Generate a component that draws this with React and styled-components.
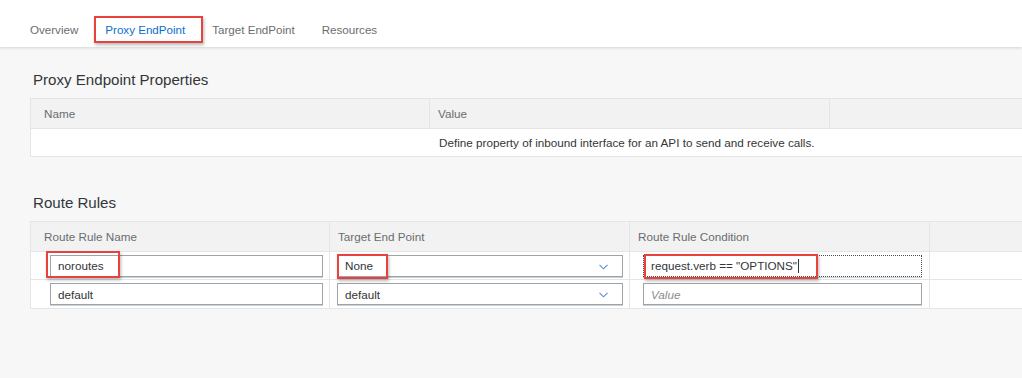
import React from "react";
import styled, { createGlobalStyle } from "styled-components";

const GlobalStyle = createGlobalStyle`
  html, body { margin: 0; padding: 0; background: #f7f7f7; overflow: hidden; }
  body { font-family: "Liberation Sans", Arial, sans-serif; }
  * { box-sizing: border-box; }
`;

const Page = styled.div`
  width: 1022px;
  height: 378px;
  background: #f7f7f7;
  overflow: hidden;
`;

const TabBar = styled.nav`
  position: relative;
  z-index: 1;
  height: 47px;
  background: #fff;
  box-shadow: 0 1px 3px rgba(0, 0, 0, 0.14);
  display: flex;
  align-items: center;
  gap: 27px;
  padding: 13px 0 0 30px;
`;

const Tab = styled.span`
  position: relative;
  font-size: 11.6px;
  line-height: 14px;
  color: ${(p) => (p.$active ? "#0a6ed1" : "#6a6d70")};
  white-space: nowrap;
`;

const Highlight = styled.span`
  position: absolute;
  top: ${(p) => p.$top}px;
  left: ${(p) => p.$left}px;
  width: ${(p) => p.$w}px;
  height: ${(p) => p.$h}px;
  border: 2px solid #e8413e;
  box-shadow: 1px 2px 3px rgba(0, 0, 0, 0.28);
  pointer-events: none;
  z-index: 2;
`;

const Content = styled.main`
  padding-left: 30px;
`;

const Section = styled.section`
  margin-top: ${(p) => p.$mt || 0}px;
`;

const Title = styled.h2`
  margin: 0;
  height: 51px;
  padding: 14px 0 0 3px;
  display: flex;
  align-items: center;
  font-size: 15.1px;
  font-weight: normal;
  color: #32363a;
`;

const Table = styled.div`
  display: grid;
  grid-template-columns: ${(p) => p.$cols};
  width: 1100px;
  border: 1px solid #e5e5e5;
  border-right: none;
  background: #fff;
`;

const HeadCell = styled.div`
  height: 30px;
  background: #f2f2f2;
  border-bottom: 1px solid #e5e5e5;
  border-right: 1px solid #e5e5e5;
  display: flex;
  align-items: center;
  padding-left: ${(p) => p.$pl ?? 8}px;
  font-size: 11.7px;
  color: #6a6d70;
  white-space: nowrap;
`;

const Cell = styled.div`
  height: ${(p) => p.$h || 28}px;
  display: flex;
  align-items: center;
  padding-left: ${(p) => p.$pl ?? 8}px;
  padding-right: ${(p) => p.$pr ?? 0}px;
  border-right: ${(p) => (p.$divider ? "1px solid #e5e5e5" : "none")};
  border-bottom: ${(p) => (p.$last ? "none" : "1px solid #e5e5e5")};
  font-size: 11.7px;
  color: #32363a;
  white-space: nowrap;
`;

const Field = styled.div`
  position: relative;
  flex: 1;
  height: 22px;
  display: flex;
  align-items: center;
  padding: 0 7px;
  background: #fff;
  border: 1px ${(p) => (p.$focused ? "dotted #4a4d50" : "solid #9ea3a8")};
  box-shadow: 0 1px 0 #c9d1d9;
  font-size: 11.7px;
  color: #32363a;
`;

const Placeholder = styled.span`
  font-style: italic;
  color: #8a8d90;
`;

const Caret = styled.span`
  display: inline-block;
  width: 1px;
  height: 14px;
  background: #32363a;
  margin-left: 1px;
`;

const Chevron = styled.svg`
  position: absolute;
  right: 14px;
  top: 8px;
`;

const ChevronIcon = () => (
  <Chevron width="9" height="6" viewBox="0 0 9 6" fill="none">
    <path d="M0.5 0.8 L4.5 4.8 L8.5 0.8" stroke="#5a8fcf" strokeWidth="1.1" />
  </Chevron>
);

const routeRows = [
  { name: "noroutes", target: "None", cond: 'request.verb == "OPTIONS"', hl: true },
  { name: "default", target: "default", cond: "" },
];

export default function App() {
  return (
    <Page>
      <GlobalStyle />
      <TabBar>
        <Tab>Overview</Tab>
        <Tab $active>
          Proxy EndPoint
          <Highlight $top={-7} $left={-11} $w={109} $h={27} />
        </Tab>
        <Tab>Target EndPoint</Tab>
        <Tab>Resources</Tab>
      </TabBar>
      <Content>
        <Section>
          <Title>Proxy Endpoint Properties</Title>
          <Table $cols="399px 400px 1fr">
            <HeadCell $pl={13}>Name</HeadCell>
            <HeadCell>Value</HeadCell>
            <HeadCell />
            <Cell $h={27} $last />
            <Cell $h={27} $pl={9} $last>
              Define property of inbound interface for an API to send and receive calls.
            </Cell>
            <Cell $h={27} $last />
          </Table>
        </Section>
        <Section $mt={13}>
          <Title>Route Rules</Title>
          <Table $cols="299px 300px 300px 1fr">
            <HeadCell $pl={13}>Route Rule Name</HeadCell>
            <HeadCell>Target End Point</HeadCell>
            <HeadCell>Route Rule Condition</HeadCell>
            <HeadCell />
            {routeRows.map((r, i) => {
              const last = i === routeRows.length - 1;
              return (
                <React.Fragment key={r.name}>
                  <Cell $divider $last={last} $pl={19} $pr={6}>
                    <Field>
                      {r.name}
                      {r.hl && <Highlight $top={-5} $left={-5} $w={74} $h={27} />}
                    </Field>
                  </Cell>
                  <Cell $divider $last={last} $pl={7} $pr={6}>
                    <Field>
                      {r.target}
                      <ChevronIcon />
                      {r.hl && <Highlight $top={-2} $left={-1} $w={51} $h={25} />}
                    </Field>
                  </Cell>
                  <Cell $divider $last={last} $pl={13} $pr={7}>
                    <Field $focused={r.hl}>
                      {r.cond ? (
                        <>
                          {r.cond}
                          <Caret />
                        </>
                      ) : (
                        <Placeholder>Value</Placeholder>
                      )}
                      {r.hl && <Highlight $top={-2} $left={0} $w={174} $h={25} />}
                    </Field>
                  </Cell>
                  <Cell $last={last} />
                </React.Fragment>
              );
            })}
          </Table>
        </Section>
      </Content>
    </Page>
  );
}
